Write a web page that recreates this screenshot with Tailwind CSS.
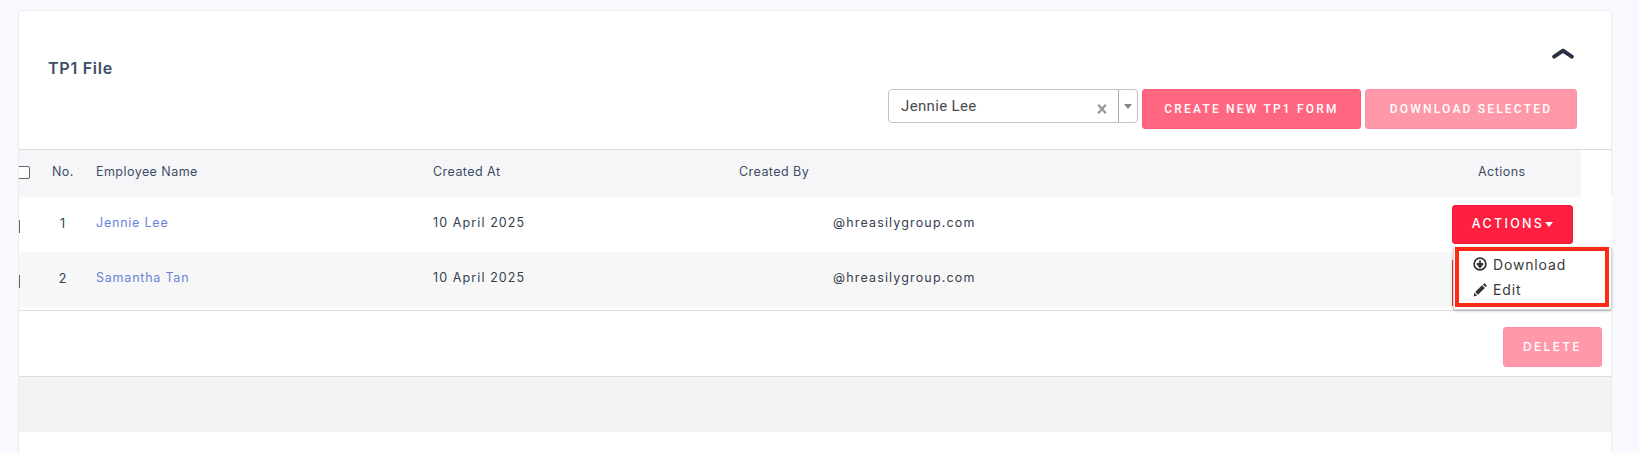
<!DOCTYPE html>
<html lang="en">
<head>
    <meta charset="UTF-8">
    <title>TP1 File</title>
    <script src="https://cdn.jsdelivr.net/npm/@tailwindcss/browser@4"></script>
</head>
<body class="bg-[#f8f9fe] h-[453px] overflow-hidden font-['Inter',sans-serif]">
    <div class="pl-[18px] pr-[27px] pt-[10px]">
        <div class="relative bg-white border-l border-r border-t border-[#e9ecef] rounded-t h-[443px]">

            <!-- header -->
            <div class="flex justify-between h-[138px]">
                <h3 class="pl-[29px] pt-[47px] text-[16px] leading-5 font-semibold tracking-[0.75px] text-[#3d4d65]">TP1 File</h3>
                <div class="flex flex-col items-end pr-[34px]">
                    <svg class="mt-[37px] mr-[3px]" width="22" height="11" viewBox="0 0 22 11">
                        <path d="M2.2 8.6 L11 2.6 L19.8 8.6" fill="none" stroke="#2a3246" stroke-width="4" stroke-linecap="round" stroke-linejoin="round"/>
                    </svg>
                    <div class="flex gap-1 items-start mt-[30px]">
                        <div class="flex items-center w-[250px] h-[34px] border border-[#c4c4c4] rounded bg-white">
                            <span class="flex-1 pl-3 text-[15px] text-[#4a4a4a] font-['Roboto',sans-serif] tracking-[0.35px]">Jennie Lee</span>
                            <svg class="mr-[11px] mt-[6px]" width="10" height="10" viewBox="0 0 10 10">
                                <path d="M1.2 0.8 L8.8 9.2 M8.8 0.8 L1.2 9.2" stroke="#999" stroke-width="2.4"/>
                            </svg>
                            <div class="w-[19px] h-full border-l border-[#aaa] flex justify-center pt-[14px]">
                                <svg width="8" height="5" viewBox="0 0 8 5"><path d="M0 0 H8 L4 5 Z" fill="#888"/></svg>
                            </div>
                        </div>
                        <button class="w-[219px] h-[40px] pb-[1px] rounded-[3px] bg-[#ff6680] border border-[#ff5a76] text-white font-['Roboto',sans-serif] font-medium text-[12px] tracking-[2.2px]">CREATE NEW TP1 FORM</button>
                        <button class="w-[212px] h-[40px] pb-[1px] rounded-[3px] bg-[#ff99aa] border border-[#ff8fa2] text-white font-['Roboto',sans-serif] font-medium text-[12px] tracking-[2.2px]">DOWNLOAD SELECTED</button>
                    </div>
                </div>
            </div>

            <!-- table -->
            <div class="border-t border-[#dcdcdc]">
                <div class="flex items-center w-[1562px] h-[47px] pb-[3px] bg-[#f6f6f8] text-[12.5px] tracking-[0.45px] text-[#3d4d65]">
                    <div class="w-[77px] flex items-center overflow-hidden">
                        <span class="block shrink-0 w-[13px] h-[13px] border border-[#666] rounded-[2px] bg-white -ml-[2px]"></span>
                        <span class="ml-[22px]">No.</span>
                    </div>
                    <div class="w-[337px]">Employee Name</div>
                    <div class="w-[306px]">Created At</div>
                    <div class="flex-1">Created By</div>
                    <div class="w-[103px]">Actions</div>
                </div>
                <div class="flex items-center w-[1593px] h-[55px] bg-white text-[12.5px] tracking-[0.78px] text-[#344050]">
                    <div class="w-[77px] flex items-center overflow-hidden">
                        <span class="block shrink-0 w-[13px] h-[13px] border border-[#666] -ml-[12px] mt-[3px]"></span>
                        <span class="w-[76px] pl-[10px] text-center">1</span>
                    </div>
                    <div class="w-[337px] pb-[2px] text-[#6a82d9]">Jennie Lee</div>
                    <div class="w-[399px] pb-[2px] tracking-[1.1px]">10 April 2025</div>
                    <div class="flex-1 pb-[2px] pl-[1px] tracking-[1.15px]">@hreasilygroup.com</div>
                    <div class="pr-[39px]">
                        <button class="w-[121px] h-[39px] rounded-[3px] bg-[#ff1f40] border border-[#e81c3a] text-white text-[12.5px] tracking-[2.3px] font-medium flex items-center justify-center">
                            ACTIONS<svg class="ml-[1px]" width="8" height="5" viewBox="0 0 8 5"><path d="M0 0 H8 L4 5 Z" fill="#fff"/></svg>
                        </button>
                    </div>
                </div>
                <div class="flex items-center w-[1562px] h-[55px] bg-[#f7f7f7] text-[12.5px] tracking-[0.78px] text-[#344050]">
                    <div class="w-[77px] flex items-center overflow-hidden">
                        <span class="block shrink-0 w-[13px] h-[13px] border border-[#666] -ml-[12px] mt-[3px]"></span>
                        <span class="w-[76px] pl-[10px] text-center">2</span>
                    </div>
                    <div class="w-[337px] pb-[2px] text-[#6a82d9]">Samantha Tan</div>
                    <div class="w-[399px] pb-[2px] tracking-[1.1px]">10 April 2025</div>
                    <div class="flex-1 pb-[2px] pl-[1px] tracking-[1.15px]">@hreasilygroup.com</div>
                    <!-- next row's button, mostly hidden under the menu -->
                    <div class="w-[129px] self-start"><div class="w-[2px] h-[46px] mt-[8px] bg-[#ff1f40]"></div></div>
                </div>
                <div class="h-[3px]"></div>
            </div>

            <!-- delete row -->
            <div class="flex justify-end items-start h-[66px] border-t border-[#dcdcdc] pt-[16px] pr-[9px]">
                <button class="w-[99px] h-[40px] rounded-[3px] bg-[#ff99aa] border border-[#ff8fa2] text-white font-medium text-[12px] tracking-[2.3px]">DELETE</button>
            </div>
            <div class="h-[56px] bg-[#f3f3f3] border-t border-[#dcdcdc]"></div>

            <!-- open actions menu -->
            <div class="absolute left-[1434px] top-[236px] w-[159px] h-[63px] bg-white border border-[#d5d5d5] rounded-[3px] shadow-[0_1px_3px_rgba(0,0,0,0.25)] text-[#3a3a3a] text-[14px] tracking-[0.85px]">
                <div class="ml-[1px] w-[154px] h-[60px] border-[4px] border-[#ff2a14] pl-[14px] -mt-[1px]">
                    <div class="flex items-center h-[26px] gap-[6px]">
                        <svg width="14" height="14" viewBox="0 0 14 14">
                            <circle cx="7" cy="7" r="5.9" fill="none" stroke="#333" stroke-width="1.7"/>
                            <path d="M7 3.4 V7 M4.4 7 H9.6 L7 10.2 Z" stroke="#333" stroke-width="1.8" fill="#333" stroke-linejoin="round"/>
                        </svg>
                        <span>Download</span>
                    </div>
                    <div class="flex items-center h-[25px] gap-[6px]">
                        <svg width="14" height="14" viewBox="0 0 14 14">
                            <path d="M0.5 13.5 L1.4 9.8 L4.2 12.6 Z M2.2 9 L9 2.2 L11.8 5 L5 11.8 Z M9.8 1.4 L11 0.5 Q11.6 0.2 12.1 0.7 L13.3 1.9 Q13.8 2.4 13.5 3 L12.6 4.2 Z" fill="#333"/>
                        </svg>
                        <span>Edit</span>
                    </div>
                </div>
            </div>
        </div>
    </div>
</body>
</html>
